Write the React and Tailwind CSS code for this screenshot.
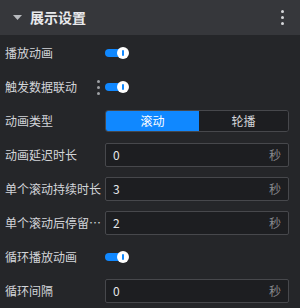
import React from 'react';

function Toggle() {
  return (
    <div className="relative w-[24px] h-[12px]">
      <div className="absolute left-0 top-[2px] w-[20px] h-[8px] rounded-full bg-[#1088ff]" />
      <div className="absolute right-0 top-0 w-[12px] h-[12px] rounded-full bg-white flex items-center justify-center">
        <div className="w-[2px] h-[6px] rounded-full bg-[#1088ff]" />
      </div>
    </div>
  );
}

function Dots({ color = 'bg-[#c8c9cc]' }) {
  return (
    <div className="flex flex-col gap-[3px]">
      <span className={`w-[3px] h-[3px] rounded-full ${color}`} />
      <span className={`w-[3px] h-[3px] rounded-full ${color}`} />
      <span className={`w-[3px] h-[3px] rounded-full ${color}`} />
    </div>
  );
}

function NumberInput({ value }) {
  return (
    <div className="w-[184px] h-[24px] flex items-center justify-between px-[7px] bg-[#1d1e21] border border-[#47484c] rounded-[2px]">
      <span className="text-[12px] text-[#e6e7ea]">{value}</span>
      <span className="text-[12px] text-[#86888c]">秒</span>
    </div>
  );
}

function Row({ label, children, extra }) {
  return (
    <div className="h-[34px] flex items-center pl-[5px] pr-[11px]">
      <div className="w-[100px] flex items-center text-[12px] text-[#d3d5d9] whitespace-nowrap">
        <span className="truncate max-w-[98px]">{label}</span>
        {extra}
      </div>
      {children}
    </div>
  );
}

export default function App() {
  return (
    <div className="w-[300px] h-[308px] bg-[#252629] font-['Noto_Sans_CJK_SC','Noto_Sans',sans-serif] overflow-hidden">
      <div className="h-[35px] bg-[#36373b] flex items-center pl-[13px] pr-[16px]">
        <svg width="9" height="6" viewBox="0 0 9 6" className="mr-[8px]">
          <path d="M0 0 L9 0 L4.5 5 Z" fill="#b8babe" />
        </svg>
        <span className="text-[14px] font-bold text-[#e8e9ec] flex-1">展示设置</span>
        <Dots color="bg-[#d6d7da]" />
      </div>
      <div className="pt-[1px]">
        <Row label="播放动画"><Toggle /></Row>
        <Row
          label="触发数据联动"
          extra={<div className="ml-auto mr-[5px]"><Dots color="bg-[#9fa1a5]" /></div>}
        >
          <Toggle />
        </Row>
        <Row label="动画类型">
          <div className="w-[184px] h-[22px] flex border border-[#47484c] rounded-[3px] overflow-hidden text-[12px]">
            <div className="w-[93px] bg-[#1088ff] text-white flex items-center justify-center">滚动</div>
            <div className="flex-1 bg-[#1d1e21] text-[#d3d5d9] flex items-center justify-center">轮播</div>
          </div>
        </Row>
        <Row label="动画延迟时长"><NumberInput value="0" /></Row>
        <Row label="单个滚动持续时长"><NumberInput value="3" /></Row>
        <Row label="单个滚动后停留时长"><NumberInput value="2" /></Row>
        <Row label="循环播放动画"><Toggle /></Row>
        <Row label="循环间隔"><NumberInput value="0" /></Row>
      </div>
    </div>
  );
}
